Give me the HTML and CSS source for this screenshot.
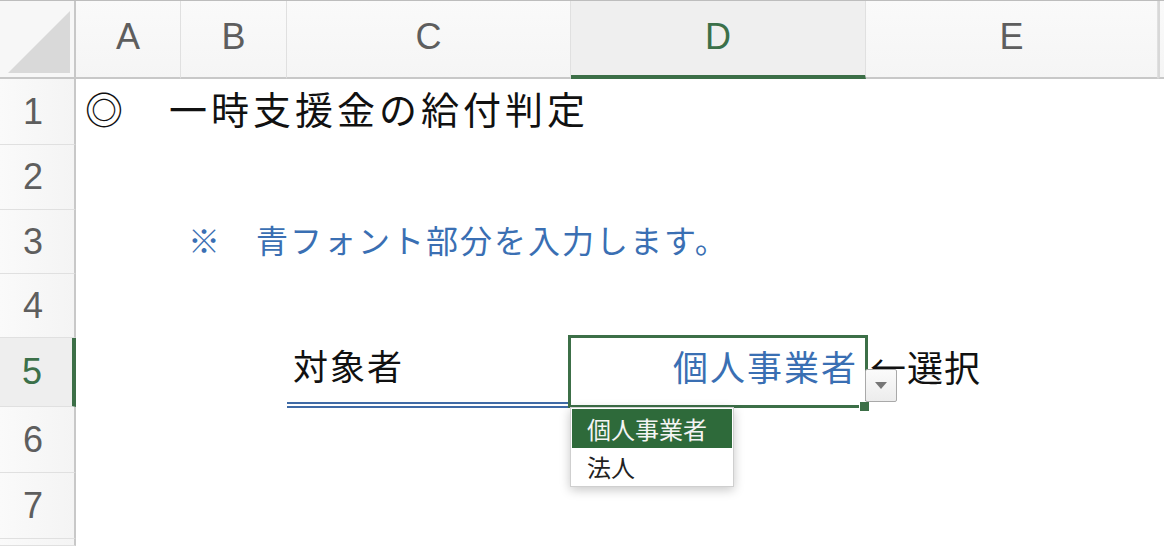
FILE: index.html
```html
<!DOCTYPE html>
<html lang="ja">
<head>
<meta charset="utf-8">
<link rel="stylesheet" href="styles.css">
</head>
<body>
<div class="sheet">
  <div class="corner"><svg width="74" height="76" viewBox="0 0 74 76"><polygon points="8,72 70,10 70,72" fill="#d9d9d9"/></svg></div>
  <div class="colhead">A</div>
  <div class="colhead">B</div>
  <div class="colhead">C</div>
  <div class="colhead active">D</div>
  <div class="colhead">E</div>
  <div class="colhead last"></div>

  <div class="rowhead">1</div>
  <div class="cell title span-all">◎　一時支援金の給付判定</div>

  <div class="rowhead">2</div>
  <div class="cell span-all"></div>

  <div class="rowhead">3</div>
  <div class="cell"></div>
  <div class="cell note span-rest">※　青フォント部分を入力します。</div>

  <div class="rowhead">4</div>
  <div class="cell span-all"></div>

  <div class="rowhead active">5</div>
  <div class="cell"></div>
  <div class="cell"></div>
  <div class="cell label">対象者</div>
  <div class="cell selected">
    <span class="value">個人事業者</span>
    <span class="fill-handle"></span>
    <span class="dd-button"><svg width="14" height="9" viewBox="0 0 14 9"><polygon points="1,1 13,1 7,8" fill="#767676"/></svg></span>
    <div class="dd-list">
      <div class="dd-item on">個人事業者</div>
      <div class="dd-item">法人</div>
    </div>
  </div>
  <div class="cell hint">←選択</div>
  <div class="cell"></div>

  <div class="rowhead">6</div>
  <div class="cell span-all"></div>

  <div class="rowhead">7</div>
  <div class="cell span-all"></div>

  <div class="rowhead"></div>
  <div class="cell span-all"></div>
</div>
</body>
</html>
```
FILE: styles.css
```css
html, body {
  margin: 0;
  padding: 0;
  background: #ffffff;
}
body {
  width: 1164px;
  height: 546px;
  overflow: hidden;
  font-family: "Noto Sans CJK JP", "Noto Sans", sans-serif;
}
.sheet {
  display: grid;
  grid-template-columns: 76px 105px 106px 284px 295px 292px 1fr;
  grid-template-rows: 78px 66px 65px 64px 64px 69px 66px 66px 1fr;
  height: 546px;
  border-top: 1px solid #bdbdbd;
  box-sizing: border-box;
}
.corner {
  background: #f7f7f7;
  border-right: 2px solid #c8c8c8;
  border-bottom: 2px solid #c8c8c8;
  box-sizing: border-box;
  overflow: hidden;
}
.corner svg { display: block; }
.colhead {
  background: linear-gradient(#fafafa, #f5f5f5);
  border-right: 1px solid #e0e0e0;
  border-bottom: 2px solid #c8c8c8;
  box-sizing: border-box;
  display: flex;
  align-items: center;
  justify-content: center;
  font-family: "Liberation Sans", Arial, sans-serif;
  font-size: 36px;
  color: #5e5e5e;
  padding-bottom: 4px;
}
.colhead.active {
  background: #efefef;
  color: #3b7049;
  border-bottom: 4px solid #3c6f47;
  padding-bottom: 2px;
}
.colhead.last {
  border-left: 2px solid #d8d8d8;
  border-right: none;
}
.rowhead {
  grid-column: 1;
  background: linear-gradient(90deg, #fafafa, #f4f4f4);
  border-right: 2px solid #c8c8c8;
  border-bottom: 1px solid #e0e0e0;
  box-sizing: border-box;
  display: flex;
  align-items: center;
  justify-content: center;
  font-family: "Liberation Sans", Arial, sans-serif;
  font-size: 36px;
  color: #5e5e5e;
  padding-right: 8px;
}
.rowhead.active {
  background: #eeeeee;
  color: #3b7049;
  border-right: 4px solid #3c6f47;
  padding-right: 8px;
}
.cell {
  position: relative;
  display: flex;
  align-items: center;
  white-space: nowrap;
  min-width: 0;
}
.span-all { grid-column: 2 / 8; }
.span-rest { grid-column: 3 / 8; }
.title {
  font-size: 38px;
  letter-spacing: 4px;
  color: #111111;
  padding-left: 9px;
  padding-bottom: 10px;
}
.note {
  font-size: 32px;
  letter-spacing: 2px;
  color: #3a6fb3;
  padding-left: 7px;
  padding-bottom: 6px;
}
.label {
  font-size: 35px;
  letter-spacing: 2px;
  color: #111111;
  padding-left: 6px;
  padding-bottom: 12px;
  border-bottom: 6px double #3f6ba6;
  box-sizing: border-box;
  margin-bottom: -1px;
}
.selected {
  justify-content: flex-end;
  padding-right: 8px;
  padding-bottom: 14px;
  font-size: 35px;
  letter-spacing: 2px;
  color: #3a6fb3;
  z-index: 2;
}
.selected::after {
  content: "";
  position: absolute;
  left: -3px;
  right: -2px;
  top: -3px;
  bottom: -1px;
  border: 3px solid #3c6f47;
  pointer-events: none;
}
.fill-handle {
  position: absolute;
  left: 288px;
  top: 63px;
  width: 9px;
  height: 9px;
  background: #3c6f47;
  border-top: 1px solid #ffffff;
  border-left: 1px solid #ffffff;
  z-index: 3;
}
.dd-button {
  position: absolute;
  left: 294px;
  top: 31px;
  width: 32px;
  height: 33px;
  box-sizing: border-box;
  border: 1px solid #a9a9a9;
  border-radius: 2px;
  background: linear-gradient(#fbfbfb, #ececec);
  display: flex;
  align-items: center;
  justify-content: center;
  z-index: 4;
  letter-spacing: 0;
}
.dd-button svg { display: block; }
.dd-list {
  position: absolute;
  left: -1px;
  top: 69px;
  width: 164px;
  box-sizing: border-box;
  border: 1px solid #cfcfcf;
  background: #ffffff;
  padding: 1px;
  box-shadow: 0 3px 10px rgba(0, 0, 0, 0.22);
  letter-spacing: 0;
  z-index: 5;
}
.dd-item {
  height: 37px;
  display: flex;
  align-items: center;
  padding-left: 15px;
  font-size: 24px;
  color: #222222;
}
.dd-item.on {
  background: #2e6a3a;
  color: #f4f4f4;
  height: 39px;
}
.hint {
  font-size: 36px;
  letter-spacing: 1px;
  color: #111111;
  padding-left: 4px;
  padding-bottom: 14px;
  z-index: 1;
}
```
